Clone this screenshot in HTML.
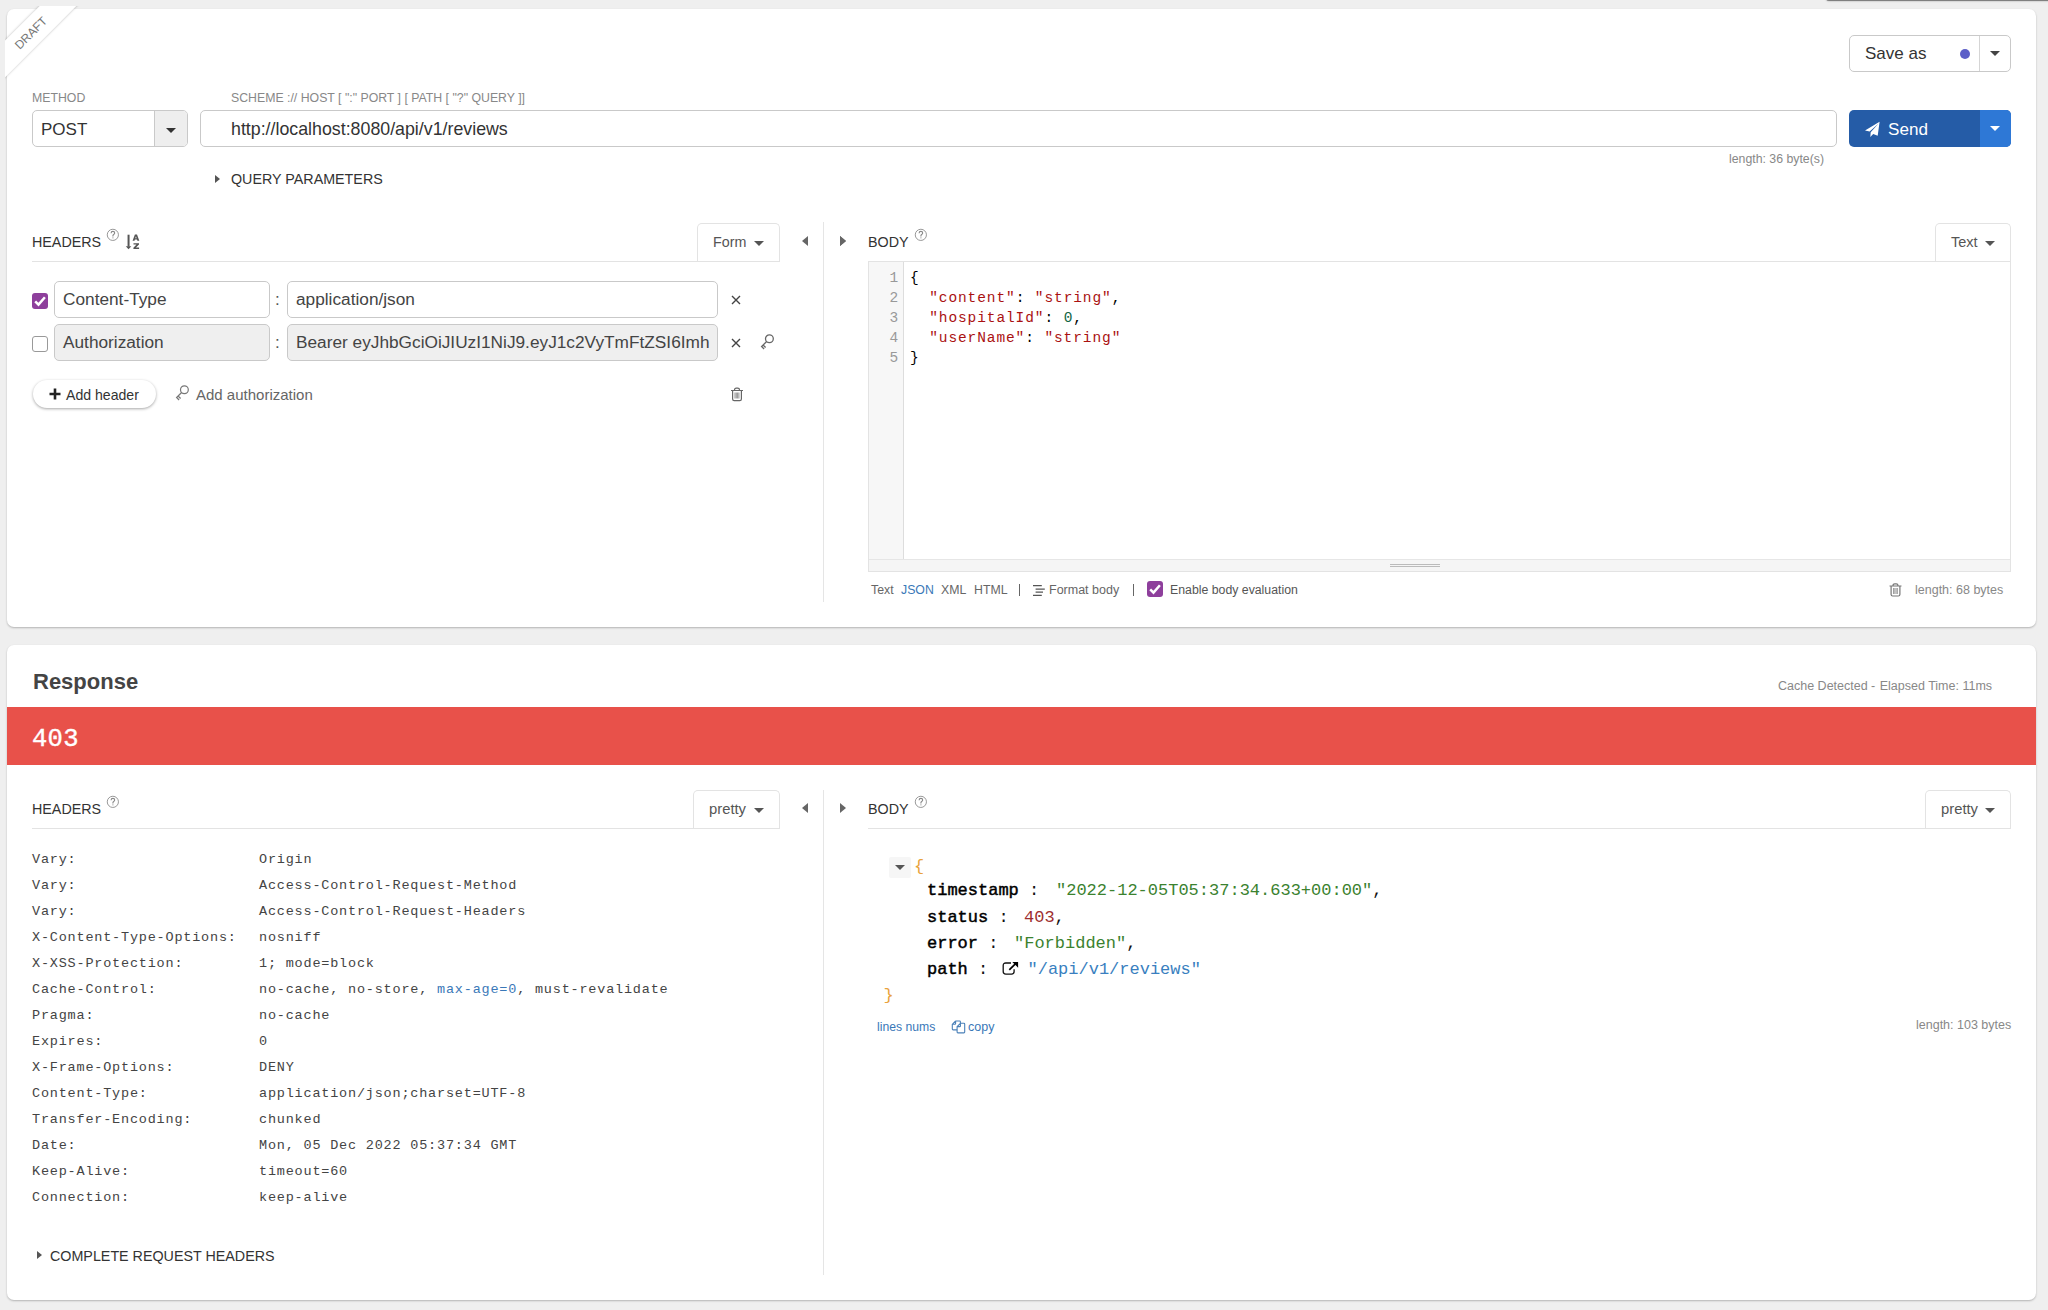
<!DOCTYPE html>
<html><head><meta charset="utf-8">
<style>
*{box-sizing:border-box;margin:0;padding:0}
html,body{width:2048px;height:1310px;overflow:hidden;background:#efefef;font-family:"Liberation Sans",sans-serif;color:#333}
.a{position:absolute;white-space:nowrap}
.card{position:absolute;background:#fff;border-radius:7px;box-shadow:0 1px 2px rgba(0,0,0,.25)}
.lbl{font-size:12.3px;color:#888;line-height:14px}
.sm{font-size:12.5px;color:#888;line-height:14px}
.box{position:absolute;border:1px solid #c9c9c9;border-radius:5px;background:#fff}
.tri-d{position:absolute;width:0;height:0;border-left:5px solid transparent;border-right:5px solid transparent;border-top:5px solid #444}
.tri-r{position:absolute;width:0;height:0;border-top:4px solid transparent;border-bottom:4px solid transparent;border-left:5px solid #555}
.tri-l{position:absolute;width:0;height:0;border-top:5px solid transparent;border-bottom:5px solid transparent;border-right:6px solid #666}
.tri-rr{position:absolute;width:0;height:0;border-top:5px solid transparent;border-bottom:5px solid transparent;border-left:6px solid #666}
.sec{font-size:14.3px;color:#333;line-height:16px}
.q{position:absolute;width:12px;height:12px;border:1px solid #999;border-radius:50%;font-size:9px;color:#999;text-align:center;line-height:10px}
.tab{position:absolute;border:1px solid #e3e3e3;border-bottom:none;border-radius:5px 5px 0 0;background:#fff}
.hl{position:absolute;height:1px;background:#e3e3e3}
.inp{position:absolute;border:1px solid #c9c9c9;border-radius:5px;background:#fff;font-size:17.25px;color:#444;line-height:20px;padding:7px 0 0 8px;white-space:nowrap;overflow:hidden}
.mono{font-family:"Liberation Mono",monospace}
.cm{position:absolute;font-family:"Liberation Mono",monospace;font-size:14.5px;letter-spacing:.9px;line-height:20px;white-space:pre;color:#000}
.s{color:#a11}.n{color:#164}
.hd{position:absolute;font-family:"Liberation Mono",monospace;font-size:13.5px;letter-spacing:.8px;line-height:26px;color:#444;white-space:pre}
.js{position:absolute;font-family:"Liberation Mono",monospace;font-size:17px;line-height:26.2px;color:#111;white-space:pre}
.js b{font-weight:normal;color:#000;-webkit-text-stroke:.45px #000}
.jg{color:#3b822f}.jn{color:#9e2f2f}.jl{color:#3a7fc0}.jo{color:#e9a23b}
</style></head><body>

<!-- shadow bar top right -->
<div class="a" style="left:1826px;top:-5px;width:240px;height:6px;background:#808080;border-radius:4px;box-shadow:0 0 2px rgba(0,0,0,.35)"></div>

<!-- ========== REQUEST CARD ========== -->
<div class="card" style="left:7px;top:8.5px;width:2029px;height:618px"></div>

<!-- DRAFT ribbon -->
<div class="a" style="left:5px;top:6px;width:90px;height:90px;overflow:hidden">
  <div class="a" style="left:-28px;top:13px;width:110px;height:26px;background:#fff;transform:rotate(-45deg);transform-origin:55px 13px;box-shadow:0 0 2.5px rgba(0,0,0,.28);font-size:12px;color:#777;text-align:center;text-indent:-3px;line-height:27.5px">DRAFT</div>
</div>

<!-- Save as -->
<div class="box" style="left:1849px;top:35px;width:162px;height:37px"></div>
<div class="a" style="left:1979px;top:36px;width:1px;height:35px;background:#d5d5d5"></div>
<div class="a" style="left:1865px;top:44px;font-size:17px;line-height:20px;color:#333">Save as</div>
<div class="a" style="left:1960px;top:49px;width:10px;height:10px;border-radius:50%;background:#5c5fc8"></div>
<div class="tri-d" style="left:1990px;top:51px"></div>

<!-- Method / URL -->
<div class="a lbl" style="left:32px;top:91px">METHOD</div>
<div class="a lbl" style="left:231px;top:91px">SCHEME :// HOST [ ":" PORT ] [ PATH [ "?" QUERY ]]</div>
<div class="box" style="left:32px;top:110px;width:156px;height:37px;overflow:hidden"><div class="a" style="left:121px;top:0;width:34px;height:35px;background:#eee;border-left:1px solid #c9c9c9"></div></div>
<div class="a" style="left:41px;top:119.5px;font-size:17px;line-height:20px;color:#333">POST</div>
<div class="tri-d" style="left:166px;top:128px;border-top-color:#333"></div>

<div class="box" style="left:200px;top:110px;width:1637px;height:37px"></div>
<div class="a" style="left:231px;top:119px;font-size:17.8px;line-height:20px;color:#333">http://localhost:8080/api/v1/reviews</div>

<!-- Send -->
<div class="a" style="left:1849px;top:110px;width:162px;height:37px;border-radius:5px;background:#255ca7;overflow:hidden"><div class="a" style="left:131px;top:0;width:31px;height:37px;background:#2e78d6"></div></div>
<svg class="a" style="left:1864px;top:121px" width="17" height="17" viewBox="0 0 17 17"><path d="M15.6 0.8 L1 9.4 L5.6 10.5 L14.6 2.6 L6.7 11.3 L6.3 15.9 L9.2 12.9 L13.7 14.8 Z" fill="#fff"/></svg>
<div class="a" style="left:1888px;top:120px;font-size:17.1px;line-height:20px;color:#fff">Send</div>
<div class="tri-d" style="left:1990px;top:126px;border-top-color:#fff"></div>

<div class="a sm" style="left:1729px;top:152px;font-size:12.3px">length: 36 byte(s)</div>

<div class="tri-r" style="left:215px;top:175px"></div>
<div class="a sec" style="left:231px;top:171px">QUERY PARAMETERS</div>

<!-- Headers (request) -->
<div class="a sec" style="left:32px;top:234px">HEADERS</div>
<svg class="a" style="left:106px;top:228px" width="14" height="14" viewBox="0 0 14 14"><circle cx="6.85" cy="6.85" r="5.6" stroke="#999" stroke-width="1" fill="none"/><path d="M5.1 5.3 Q5.1 3.4 6.9 3.4 Q8.7 3.4 8.7 5 Q8.7 5.9 7.7 6.5 Q6.9 7 6.9 7.9 V8.5" stroke="#888" stroke-width="1.1" fill="none"/><rect x="6.4" y="9.3" width="1.05" height="1.1" fill="#999"/></svg>
<svg class="a" style="left:124px;top:232px" width="18" height="18" viewBox="0 0 18 18"><path d="M4.56 2.7 V14.6" stroke="#555" stroke-width="2"/><path d="M1.8 14.3 H7.3 L4.55 17.2 Z" fill="#555"/><path d="M10.9 2.5 H13 L15.3 8.8 H13.4 L13 7.6 H10.9 L10.5 8.8 H8.6 Z M11.3 6.2 H12.6 L11.95 4.2 Z" fill="#555" fill-rule="evenodd"/><path d="M9.5 11.2 H15 V12.5 L11.9 15.6 H15.1 V17 H9.4 V15.7 L12.5 12.6 H9.5 Z" fill="#555"/></svg>
<div class="tab" style="left:697px;top:223px;width:83px;height:39px"></div>
<div class="hl" style="left:32px;top:261px;width:748px"></div>
<div class="a" style="left:713px;top:234px;font-size:14.3px;line-height:16px;color:#555">Form</div>
<div class="tri-d" style="left:754px;top:241px;border-top-color:#555"></div>
<div class="tri-l" style="left:802px;top:236px"></div>
<div class="a" style="left:823px;top:222px;width:1px;height:380px;background:#e5e5e5"></div>
<div class="tri-rr" style="left:840px;top:236px"></div>

<!-- header rows -->
<div class="a" style="left:32px;top:293px;width:16px;height:16px;border-radius:3px;background:#8e3f9c"></div>
<svg class="a" style="left:32px;top:293px" width="16" height="16" viewBox="0 0 16 16"><path d="M3.2 8.3 L6.5 11.6 L12.9 4.3" stroke="#fff" stroke-width="2.5" fill="none"/></svg>
<div class="inp" style="left:54px;top:281px;width:216px;height:37px">Content-Type</div>
<div class="a" style="left:275px;top:290px;font-size:17px;line-height:20px;color:#555">:</div>
<div class="inp" style="left:287px;top:281px;width:431px;height:37px">application/json</div>
<svg class="a" style="left:731px;top:295px" width="10" height="10" viewBox="0 0 10 10"><path d="M1 1 L9 9 M9 1 L1 9" stroke="#444" stroke-width="1.4"/></svg>

<div class="a" style="left:32px;top:336px;width:16px;height:16px;border-radius:3px;border:1px solid #999;background:#fff"></div>
<div class="inp" style="left:54px;top:324px;width:216px;height:37px;background:#efefef">Authorization</div>
<div class="a" style="left:275px;top:333px;font-size:17px;line-height:20px;color:#555">:</div>
<div class="inp" style="left:287px;top:324px;width:431px;height:37px;background:#efefef">Bearer eyJhbGciOiJIUzI1NiJ9.eyJ1c2VyTmFtZSI6Imh</div>
<svg class="a" style="left:731px;top:338px" width="10" height="10" viewBox="0 0 10 10"><path d="M1 1 L9 9 M9 1 L1 9" stroke="#444" stroke-width="1.4"/></svg>
<svg class="a" style="left:760px;top:334px" width="16" height="17" viewBox="0 0 16 17"><circle cx="9.4" cy="4.7" r="3.9" stroke="#666" stroke-width="1.3" fill="none"/><path d="M6.6 7.5 L1.6 12.5 L4.1 15 M3.1 11 L5.6 13.5" stroke="#666" stroke-width="1.3" fill="none"/></svg>

<div class="a" style="left:33px;top:380px;width:123px;height:28px;border-radius:14px;background:#fff;box-shadow:0 1px 3px rgba(0,0,0,.35)"></div>
<svg class="a" style="left:49px;top:388px" width="12" height="12" viewBox="0 0 12 12"><path d="M6 0.5 V11.5 M0.5 6 H11.5" stroke="#222" stroke-width="2.6"/></svg>
<div class="a" style="left:66px;top:387px;font-size:14.1px;line-height:16px;color:#333">Add header</div>
<svg class="a" style="left:175px;top:385px" width="16" height="17" viewBox="0 0 16 17"><circle cx="9.4" cy="4.7" r="3.9" stroke="#777" stroke-width="1.2" fill="none"/><path d="M6.6 7.5 L1.6 12.5 L4.1 15 M3.1 11 L5.6 13.5" stroke="#777" stroke-width="1.2" fill="none"/></svg>
<div class="a" style="left:196px;top:387px;font-size:15px;line-height:16px;color:#666">Add authorization</div>
<svg class="a" style="left:730px;top:387px" width="14" height="15" viewBox="0 0 14 15"><path d="M1 3.5 H13 M4.5 3 Q4.5 1.2 6.3 1.2 H7.7 Q9.5 1.2 9.5 3 M2.6 4 V12 Q2.6 13.6 4.2 13.6 H9.8 Q11.4 13.6 11.4 12 V4" stroke="#666" stroke-width="1.2" fill="none"/><path d="M5 5.5 V11.5 M6.3 5.5 V11.5 M7.6 5.5 V11.5 M8.9 5.5 V11.5" stroke="#777" stroke-width=".8"/></svg>

<!-- Body (request) -->
<div class="tri-rr" style="left:840px;top:236px"></div>
<div class="a sec" style="left:868px;top:234px">BODY</div>
<svg class="a" style="left:914px;top:228px" width="14" height="14" viewBox="0 0 14 14"><circle cx="6.85" cy="6.85" r="5.6" stroke="#999" stroke-width="1" fill="none"/><path d="M5.1 5.3 Q5.1 3.4 6.9 3.4 Q8.7 3.4 8.7 5 Q8.7 5.9 7.7 6.5 Q6.9 7 6.9 7.9 V8.5" stroke="#888" stroke-width="1.1" fill="none"/><rect x="6.4" y="9.3" width="1.05" height="1.1" fill="#999"/></svg>
<div class="tab" style="left:1935px;top:223px;width:76px;height:39px"></div>
<div class="hl" style="left:868px;top:261px;width:1143px"></div>
<div class="a" style="left:1951px;top:234px;font-size:14.5px;line-height:16px;color:#555">Text</div>
<div class="tri-d" style="left:1985px;top:241px;border-top-color:#555"></div>

<!-- editor -->
<div class="a" style="left:868px;top:262px;width:1143px;height:310px;border:1px solid #e3e3e3;border-top:none;background:#fff"></div>
<div class="a" style="left:869px;top:262px;width:35px;height:297px;background:#f7f7f7;border-right:1px solid #ddd"></div>
<div class="a" style="left:869px;top:559px;width:1141px;height:12px;background:#f5f5f5;border-top:1px solid #e6e6e6"></div>
<div class="a" style="left:1390px;top:564px;width:50px;height:3px;border-top:1px solid #bbb;border-bottom:1px solid #bbb"></div>
<div class="cm" style="left:869px;top:268.4px;width:30px;text-align:right;color:#999">1
2
3
4
5</div>
<div class="cm" style="left:910px;top:268.4px">{
  <span class="s">"content"</span>: <span class="s">"string"</span>,
  <span class="s">"hospitalId"</span>: <span class="n">0</span>,
  <span class="s">"userName"</span>: <span class="s">"string"</span>
}</div>

<!-- editor footer -->
<div class="a sm" style="left:871px;top:583px;font-size:12.3px;color:#666">Text</div>
<div class="a sm" style="left:901px;top:583px;font-size:12.3px;color:#3a78b8">JSON</div>
<div class="a sm" style="left:941px;top:583px;font-size:12.3px;color:#666">XML</div>
<div class="a sm" style="left:974px;top:583px;font-size:12.3px;color:#666">HTML</div>
<div class="a" style="left:1018.5px;top:584px;width:1.2px;height:12px;background:#666"></div>
<svg class="a" style="left:1032px;top:584px" width="14" height="13" viewBox="0 0 14 13"><path d="M1 1.5 H9.8 M3.6 5.2 H12.8 M3.6 8.1 H11 M1 11.4 H9.8" stroke="#555" stroke-width="1.25"/></svg>
<div class="a sm" style="left:1049px;top:583px;font-size:12.5px;color:#666">Format body</div>
<div class="a" style="left:1133px;top:584px;width:1.2px;height:12px;background:#666"></div>
<div class="a" style="left:1147px;top:581px;width:16px;height:16px;border-radius:3px;background:#8e3f9c"></div>
<svg class="a" style="left:1147px;top:581px" width="16" height="16" viewBox="0 0 16 16"><path d="M3.2 8.3 L6.5 11.6 L12.9 4.3" stroke="#fff" stroke-width="2.5" fill="none"/></svg>
<div class="a sm" style="left:1170px;top:583px;font-size:12.3px;color:#555">Enable body evaluation</div>
<svg class="a" style="left:1889px;top:583px" width="14" height="15" viewBox="0 0 14 15"><path d="M0.5 3 H12.5 M4 2.5 Q4 0.8 5.8 0.8 H7.2 Q9 0.8 9 2.5 M2.1 3.5 V11.5 Q2.1 13 3.7 13 H9.3 Q10.9 13 10.9 11.5 V3.5" stroke="#777" stroke-width="1.2" fill="none"/><path d="M4.5 5 V11 M5.8 5 V11 M7.1 5 V11 M8.4 5 V11" stroke="#888" stroke-width=".8"/></svg>
<div class="a sm" style="left:1915px;top:583px;font-size:12.5px">length: 68 bytes</div>

<!-- ========== RESPONSE CARD ========== -->
<div class="card" style="left:7px;top:645px;width:2029px;height:655px"></div>
<div class="a" style="left:33px;top:670px;font-size:22px;font-weight:bold;line-height:24px;color:#444">Response</div>
<div class="a sm" style="left:1778px;top:679px;font-size:12.5px">Cache Detected - <span style="margin-left:1px">Elapsed Time: 11ms</span></div>
<div class="a" style="left:7px;top:707px;width:2029px;height:58px;background:#e8514a"></div>
<div class="a mono" style="left:32px;top:724.5px;font-size:25.5px;letter-spacing:.3px;line-height:30px;color:#fff;-webkit-text-stroke:.4px #fff">403</div>

<div class="a sec" style="left:32px;top:801px">HEADERS</div>
<svg class="a" style="left:106px;top:795px" width="14" height="14" viewBox="0 0 14 14"><circle cx="6.85" cy="6.85" r="5.6" stroke="#999" stroke-width="1" fill="none"/><path d="M5.1 5.3 Q5.1 3.4 6.9 3.4 Q8.7 3.4 8.7 5 Q8.7 5.9 7.7 6.5 Q6.9 7 6.9 7.9 V8.5" stroke="#888" stroke-width="1.1" fill="none"/><rect x="6.4" y="9.3" width="1.05" height="1.1" fill="#999"/></svg>
<div class="tab" style="left:693px;top:790px;width:87px;height:39px"></div>
<div class="hl" style="left:32px;top:828px;width:748px"></div>
<div class="a" style="left:709px;top:801px;font-size:14.8px;line-height:16px;color:#555">pretty</div>
<div class="tri-d" style="left:754px;top:808px;border-top-color:#555"></div>
<div class="tri-l" style="left:802px;top:803px"></div>
<div class="a" style="left:823px;top:790px;width:1px;height:485px;background:#e5e5e5"></div>
<div class="tri-rr" style="left:840px;top:803px"></div>

<div class="a sec" style="left:868px;top:801px">BODY</div>
<svg class="a" style="left:914px;top:795px" width="14" height="14" viewBox="0 0 14 14"><circle cx="6.85" cy="6.85" r="5.6" stroke="#999" stroke-width="1" fill="none"/><path d="M5.1 5.3 Q5.1 3.4 6.9 3.4 Q8.7 3.4 8.7 5 Q8.7 5.9 7.7 6.5 Q6.9 7 6.9 7.9 V8.5" stroke="#888" stroke-width="1.1" fill="none"/><rect x="6.4" y="9.3" width="1.05" height="1.1" fill="#999"/></svg>
<div class="tab" style="left:1925px;top:790px;width:86px;height:39px"></div>
<div class="hl" style="left:868px;top:828px;width:1143px"></div>
<div class="a" style="left:1941px;top:801px;font-size:14.8px;line-height:16px;color:#555">pretty</div>
<div class="tri-d" style="left:1985px;top:808px;border-top-color:#555"></div>

<div class="hd" style="left:32px;top:847px">Vary:
Vary:
Vary:
X-Content-Type-Options:
X-XSS-Protection:
Cache-Control:
Pragma:
Expires:
X-Frame-Options:
Content-Type:
Transfer-Encoding:
Date:
Keep-Alive:
Connection:</div>
<div class="hd" style="left:259px;top:847px">Origin
Access-Control-Request-Method
Access-Control-Request-Headers
nosniff
1; mode=block
no-cache, no-store, <span style="color:#3a78b8">max-age=0</span>, must-revalidate
no-cache
0
DENY
application/json;charset=UTF-8
chunked
Mon, 05 Dec 2022 05:37:34 GMT
timeout=60
keep-alive</div>

<div class="tri-r" style="left:37px;top:1251px"></div>
<div class="a sec" style="left:50px;top:1248px">COMPLETE REQUEST HEADERS</div>

<!-- response body -->
<div class="a" style="left:889px;top:857px;width:22px;height:21px;background:#f6f6f6;border-radius:2px"></div>
<div class="tri-d" style="left:895px;top:865px;border-top-color:#555"></div>
<div class="js" style="left:914px;top:854px"><span class="jo">{</span></div>
<div class="js" style="left:927px;top:878px"><b>timestamp</b> :</div>
<div class="js" style="left:1056px;top:878px"><span class="jg">"2022-12-05T05:37:34.633+00:00"</span>,</div>
<div class="js" style="left:927px;top:904.5px"><b>status</b> :</div>
<div class="js" style="left:1024px;top:904.5px"><span class="jn">403</span>,</div>
<div class="js" style="left:927px;top:931px"><b>error</b> :</div>
<div class="js" style="left:1014px;top:931px"><span class="jg">"Forbidden"</span>,</div>
<div class="js" style="left:927px;top:957px"><b>path</b> :</div>
<div class="js" style="left:1027.5px;top:957px"><span class="jl">"/api/v1/reviews"</span></div>
<div class="js" style="left:883.5px;top:983px"><span class="jo">}</span></div>
<svg class="a" style="left:1002px;top:961px" width="17" height="15" viewBox="0 0 17 15"><path d="M9 2 H3.8 Q1.2 2 1.2 4.6 V10.6 Q1.2 13.1 3.8 13.1 H9.6 Q12.1 13.1 12.1 10.6 V8.3" stroke="#111" stroke-width="1.3" fill="none"/><path d="M7.3 8.9 L13.6 2.6" stroke="#000" stroke-width="1.7"/><path d="M10.3 0.9 H16.1 V6.7 Z" fill="#000"/></svg>

<div class="a sm" style="left:877px;top:1020px;font-size:12.2px;color:#3a78b8">lines nums</div>
<svg class="a" style="left:951px;top:1020px" width="15" height="14" viewBox="0 0 15 14"><g stroke="#4a80b8" stroke-width="1.1" fill="none" stroke-linejoin="round"><path d="M4.6 1 H8.6 Q9.4 1 9.4 1.8 V3.3 M4.6 1 L1.3 4.3 V9.1 Q1.3 9.9 2.1 9.9 H6.1 M4.6 1 V3.6 Q4.6 4.3 3.9 4.3 H1.3"/><path d="M9.4 3.3 H12.9 Q13.7 3.3 13.7 4.1 V12.1 Q13.7 12.9 12.9 12.9 H6.9 Q6.1 12.9 6.1 12.1 V6.6 Z M9.4 3.3 V5.9 Q9.4 6.6 8.7 6.6 H6.1"/></g></svg>
<div class="a sm" style="left:968px;top:1020px;font-size:12.5px;color:#3a78b8">copy</div>
<div class="a sm" style="left:1916px;top:1018px;font-size:12.5px">length: 103 bytes</div>

</body></html>
